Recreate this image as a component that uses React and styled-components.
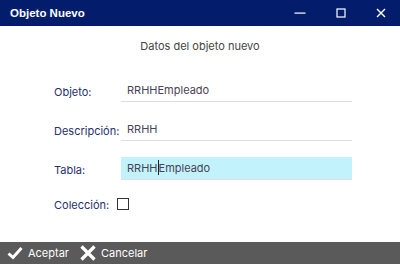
import React from "react";
import styled, { createGlobalStyle } from "styled-components";

const Global = createGlobalStyle`
  html, body { margin: 0; padding: 0; background: #fff; }
  body { font-family: Inter, "Liberation Sans", sans-serif; }
`;

const Window = styled.div`
  width: 400px;
  height: 264px;
  display: flex;
  flex-direction: column;
  background: #fff;
  overflow: hidden;
`;

const TitleBar = styled.div`
  height: 26px;
  background: #031d6c;
  display: flex;
  align-items: center;
  padding-left: 10px;
  color: #fff;
`;

const Title = styled.div`
  flex: 1;
  font-family: "Liberation Sans", Arial, sans-serif;
  font-weight: bold;
  font-size: 11.5px;
`;

const Control = styled.div`
  width: ${p => p.w}px;
  height: 26px;
  display: flex;
  align-items: center;
  justify-content: center;
`;

const Body = styled.div`
  flex: 1;
  display: flex;
  flex-direction: column;
`;

const Heading = styled.div`
  text-align: center;
  font-size: 11px;
  color: #444;
  margin-top: 13px;
  height: 15px;
`;

const Form = styled.div`
  display: grid;
  grid-template-columns: 67px 231px;
  margin: 25px 0 0 54px;
  row-gap: 16px;
  align-items: center;
`;

const Label = styled.div`
  font-size: 11px;
  color: #26306b;
  padding-top: 2px;
`;

const Field = styled.div`
  height: 22px;
  line-height: 22px;
  padding-left: 6px;
  border-bottom: 1px solid #dedede;
  background: ${p => (p.focused ? "#c2f3fd" : "transparent")};
  font-size: 11px;
  color: #4a4256;
`;

const Caret = styled.span`
  display: inline-block;
  width: 1px;
  height: 15px;
  background: #222;
  vertical-align: -3px;
`;

const Check = styled.div`
  width: 10px;
  height: 10px;
  border: 1px solid #333;
  margin-left: -4px;
`;

const CheckRow = styled.div`
  display: flex;
  align-items: center;
  height: 14px;
`;

const Footer = styled.div`
  height: 22px;
  background: #5a5a5a;
  display: flex;
  align-items: center;
  padding-left: 7px;
  gap: 11px;
  color: #fff;
  font-size: 11px;
`;

const Button = styled.div`
  display: flex;
  align-items: center;
  gap: 5px;
`;

const App = () => (
  <>
    <Global />
    <Window>
      <TitleBar>
        <Title>Objeto Nuevo</Title>
        <Control w={41}>
          <svg width="12" height="12" viewBox="0 0 12 12">
            <rect x="0.5" y="5.5" width="11" height="1.2" fill="#fff" />
          </svg>
        </Control>
        <Control w={42}>
          <svg width="10" height="10" viewBox="0 0 10 10">
            <rect x="1" y="1" width="8" height="8" fill="none" stroke="#fff" strokeWidth="1.2" />
          </svg>
        </Control>
        <Control w={38}>
          <svg width="10" height="10" viewBox="0 0 10 10">
            <path d="M1 1 L9 9 M9 1 L1 9" stroke="#fff" strokeWidth="1.4" />
          </svg>
        </Control>
      </TitleBar>
      <Body>
        <Heading>Datos del objeto nuevo</Heading>
        <Form>
          <Label>Objeto:</Label>
          <Field>RRHHEmpleado</Field>
          <Label>Descripción:</Label>
          <Field>RRHH</Field>
          <Label>Tabla:</Label>
          <Field focused>
            RRHH<Caret />Empleado
          </Field>
          <Label>Colección:</Label>
          <CheckRow>
            <Check />
          </CheckRow>
        </Form>
      </Body>
      <Footer>
        <Button>
          <svg width="16" height="14" viewBox="0 0 16 14">
            <path d="M1.5 7.5 L6 11.5 L14.5 2" fill="none" stroke="#fff" strokeWidth="3" />
          </svg>
          Aceptar
        </Button>
        <Button>
          <svg width="16" height="16" viewBox="0 0 16 16">
            <path d="M1.5 1.5 L14.5 14.5 M14.5 1.5 L1.5 14.5" stroke="#fff" strokeWidth="3.2" />
          </svg>
          Cancelar
        </Button>
      </Footer>
    </Window>
  </>
);

export default App;
